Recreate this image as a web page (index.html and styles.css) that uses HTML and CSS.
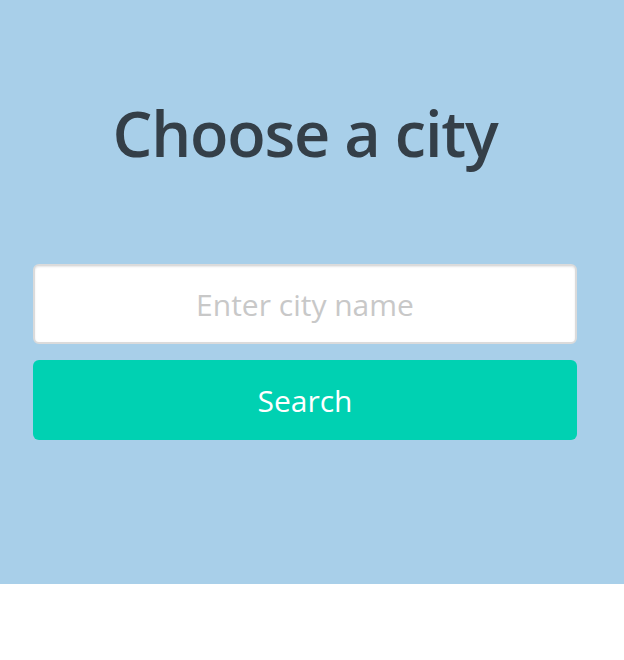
FILE: index.html
```html
<!DOCTYPE html>
<html>
<head>
<meta charset="utf-8">
<link rel="stylesheet" href="styles.css">
</head>
<body>
<section class="hero">
  <div class="container">
    <h1 class="title">Choose a city</h1>
    <form class="form">
      <input class="input" type="text" placeholder="Enter city name">
      <button class="button" type="button">Search</button>
    </form>
  </div>
</section>
</body>
</html>
```
FILE: styles.css
```css
* { box-sizing: border-box; }
html, body { margin: 0; padding: 0; background: #fff; }
body { font-family: "Open Sans", "Noto Sans", sans-serif; }
.hero {
  background: #a8cfe9;
  height: 584px;
  padding: 0 47px 0 33px;
}
.container {
  width: 544px;
  display: flex;
  flex-direction: column;
  align-items: stretch;
}
.title {
  margin: 0;
  padding-top: 88px;
  text-align: center;
  font-size: 63px;
  line-height: 90px;
  font-weight: 600;
  color: #343f48;
  letter-spacing: -1.2px;
}
.form {
  margin-top: 86px;
  display: flex;
  flex-direction: column;
  gap: 16px;
}
.input {
  height: 80px;
  border: 2px solid #dbdbdb;
  border-radius: 6px;
  background: #fff;
  text-align: center;
  font-family: inherit;
  font-size: 30px;
  color: #363636;
  outline: none;
  box-shadow: inset 0 1px 2px rgba(10,10,10,0.1);
}
.input::placeholder { color: #c8c8c8; }
.button {
  height: 80px;
  border: none;
  border-radius: 6px;
  background: #00d1b2;
  color: #fff;
  font-family: inherit;
  font-size: 30px;
}
```
